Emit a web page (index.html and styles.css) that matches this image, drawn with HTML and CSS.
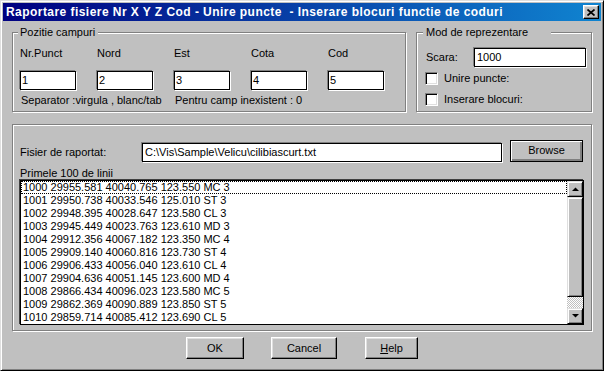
FILE: index.html
```html
<!DOCTYPE html>
<html>
<head>
<meta charset="utf-8">
<title>Raportare fisiere</title>
<link rel="stylesheet" href="styles.css">
</head>
<body>
<div class="window">
  <div class="titlebar">
    <span class="title">Raportare fisiere Nr X Y Z Cod - Unire puncte&nbsp; - Inserare blocuri functie de coduri</span>
    <span class="close"><svg width="8" height="7" viewBox="0 0 8 7"><path d="M0.5 0.5L7.5 6.5M7.5 0.5L0.5 6.5" stroke="#000" stroke-width="1.7" fill="none"/></svg></span>
  </div>
  <div class="content">
    <div class="top-row">
      <div class="group g-fields">
        <span class="legend">Pozitie campuri</span>
        <div class="fields">
          <div class="field"><span class="flabel">Nr.Punct</span><div class="input small">1</div></div>
          <div class="field"><span class="flabel">Nord</span><div class="input small">2</div></div>
          <div class="field"><span class="flabel">Est</span><div class="input small">3</div></div>
          <div class="field"><span class="flabel">Cota</span><div class="input small">4</div></div>
          <div class="field"><span class="flabel">Cod</span><div class="input small">5</div></div>
        </div>
        <div class="notes">
          <span class="note">Separator :virgula , blanc/tab</span>
          <span class="note">Pentru camp inexistent : 0</span>
        </div>
      </div>
      <div class="group g-mode">
        <span class="legend">Mod de reprezentare</span>
        <div class="scara-row"><span class="scara-label">Scara:</span><div class="input scara">1000</div></div>
        <div class="check-row first"><span class="checkbox"></span><span>Unire puncte:</span></div>
        <div class="check-row second"><span class="checkbox"></span><span>Inserare blocuri:</span></div>
      </div>
    </div>
    <div class="group g-file">
      <div class="file-row">
        <span class="file-label">Fisier de raportat:</span>
        <div class="input file-input">C:\Vis\Sample\Velicu\cilibiascurt.txt</div>
        <div class="btn default browse">Browse</div>
      </div>
      <div class="list-label">Primele 100 de linii</div>
      <div class="listbox">
        <div class="rows">
          <div class="row focus">1000 29955.581 40040.765 123.550 MC 3</div>
          <div class="row">1001 29950.738 40033.546 125.010 ST 3</div>
          <div class="row">1002 29948.395 40028.647 123.580 CL 3</div>
          <div class="row">1003 29945.449 40023.763 123.610 MD 3</div>
          <div class="row">1004 29912.356 40067.182 123.350 MC 4</div>
          <div class="row">1005 29909.140 40060.816 123.730 ST 4</div>
          <div class="row">1006 29906.433 40056.040 123.610 CL 4</div>
          <div class="row">1007 29904.636 40051.145 123.600 MD 4</div>
          <div class="row">1008 29866.434 40096.023 123.580 MC 5</div>
          <div class="row">1009 29862.369 40090.889 123.850 ST 5</div>
          <div class="row">1010 29859.714 40085.412 123.690 CL 5</div>
        </div>
        <div class="scrollbar">
          <div class="sb-btn"><svg width="7" height="4" viewBox="0 0 7 4"><path d="M0 4H7L3.5 0.5Z" fill="#000"/></svg></div>
          <div class="sb-thumb"></div>
          <div class="sb-track"></div>
          <div class="sb-btn"><svg width="7" height="4" viewBox="0 0 7 4"><path d="M0 0H7L3.5 3.5Z" fill="#000"/></svg></div>
        </div>
      </div>
    </div>
    <div class="buttons">
      <div class="btn ok">OK</div>
      <div class="btn cancel">Cancel</div>
      <div class="btn help"><u>H</u>elp</div>
    </div>
  </div>
</div>
</body>
</html>
```
FILE: styles.css
```css
* { box-sizing: border-box; }
html, body { margin: 0; padding: 0; }
body {
  background: #c0c0c0;
  font-family: "Liberation Sans", Arial, sans-serif;
  font-size: 11px;
  line-height: 13px;
  color: #000;
}
.window {
  width: 604px;
  height: 371px;
  background: #c0c0c0;
  border: 1px solid;
  border-color: #dfdfdf #000 #000 #dfdfdf;
  box-shadow: inset 1px 1px 0 #fff, inset -1px -1px 0 #808080;
  padding: 2px;
  display: flex;
  flex-direction: column;
}
.titlebar {
  height: 18px;
  flex: none;
  background: linear-gradient(to right, #000080, #1084d0);
  display: flex;
  align-items: center;
  padding-left: 3px;
}
.title {
  color: #fff;
  font-weight: bold;
  font-size: 12px;
  letter-spacing: 0.45px;
  white-space: nowrap;
}
.close {
  margin-left: auto;
  margin-right: 2px;
  width: 16px;
  height: 14px;
  background: #c0c0c0;
  border: 1px solid;
  border-color: #fff #000 #000 #fff;
  box-shadow: inset -1px -1px 0 #808080, inset 1px 1px 0 #dfdfdf;
  display: flex;
  align-items: center;
  justify-content: center;
}
.close svg { display: block; }
.content {
  flex: 1;
  display: flex;
  flex-direction: column;
  padding: 0 9px;
}
.top-row {
  margin-top: 11px;
  display: flex;
  gap: 10px;
}
.group {
  position: relative;
  border: 1px solid #808080;
  box-shadow: inset 1px 1px 0 #fff, 1px 1px 0 #fff;
}
.legend {
  position: absolute;
  top: -7px;
  background: #c0c0c0;
  white-space: nowrap;
}
.g-fields {
  width: 394px;
  height: 80px;
  padding: 14px 0 0 6px;
}
.g-fields .legend { left: 5px; padding: 0 3px 0 2px; }
.fields {
  display: grid;
  grid-template-columns: repeat(5, 77px);
}
.field {
  display: flex;
  flex-direction: column;
  align-items: flex-start;
}
.flabel { padding-left: 1px; }
.input {
  background: #fff;
  border: 1px solid #000;
  box-shadow: -1px -1px 0 #808080, 1px 1px 0 #fff;
  white-space: nowrap;
  overflow: hidden;
}
.input.small {
  width: 56px;
  height: 19px;
  margin-top: 11px;
  padding: 2px 0 0 1px;
  margin-left: 1px;
}
.notes {
  display: grid;
  grid-template-columns: 154px auto;
  margin-top: 4px;
  padding-left: 2px;
}
.g-mode {
  flex: 1;
  height: 80px;
  padding: 15px 0 0 8px;
}
.g-mode .legend { left: 6px; padding: 0 23px 0 3px; }
.scara-row {
  display: flex;
  align-items: center;
}
.scara-label { margin-left: 1px; width: 48px; }
.input.scara {
  width: 112px;
  height: 19px;
  padding: 2px 0 0 2px;
}
.check-row {
  display: flex;
  align-items: center;
  height: 13px;
}
.check-row.first { margin-top: 5px; }
.check-row.second { margin-top: 8px; }
.checkbox {
  width: 13px;
  height: 13px;
  background: #fff;
  border: 1px solid;
  border-color: #808080 #fff #fff #808080;
  box-shadow: inset 1px 1px 0 #000, inset -1px -1px 0 #dfdfdf;
  margin-right: 6px;
  flex: none;
}
.g-file {
  margin-top: 12px;
  height: 207px;
  padding: 15px 8px 0 7px;
}
.file-row {
  display: flex;
  align-items: flex-start;
  height: 22px;
}
.file-label {
  width: 122px;
  margin-top: 6px;
}
.input.file-input {
  width: 360px;
  height: 19px;
  margin-top: 3px;
  padding: 2px 0 0 2px;
}
.btn {
  background: #c0c0c0;
  border: 1px solid;
  border-color: #fff #000 #000 #fff;
  box-shadow: inset -1px -1px 0 #808080, inset 1px 1px 0 #dfdfdf;
  display: flex;
  align-items: center;
  justify-content: center;
  height: 22px;
}
.btn.default {
  border-color: #000;
  box-shadow: inset 1px 1px 0 #fff, inset -1px -1px 0 #808080, inset -2px -2px 0 #808080;
}
.browse {
  width: 73px;
  margin-left: 8px;
  padding-bottom: 1px;
}
.list-label {
  margin-top: 5px;
}
.listbox {
  width: 564px;
  height: 145px;
  background: #fff;
  border: 1px solid #000;
  box-shadow: -1px -1px 0 #404040;
  display: flex;
}
.rows {
  flex: 1;
  overflow: hidden;
}
.row {
  height: 13px;
  line-height: 13px;
  padding-left: 2px;
  white-space: nowrap;
}
.row.focus {
  outline: 1px dotted #000;
  outline-offset: -1px;
}
.scrollbar {
  width: 16px;
  flex: none;
  display: flex;
  flex-direction: column;
}
.sb-btn {
  width: 16px;
  height: 16px;
  flex: none;
  background: #c0c0c0;
  border: 1px solid;
  border-color: #dfdfdf #000 #000 #dfdfdf;
  box-shadow: inset 1px 1px 0 #fff, inset -1px -1px 0 #808080;
  display: flex;
  align-items: center;
  justify-content: center;
}
.sb-btn svg { display: block; }
.sb-thumb {
  height: 100px;
  flex: none;
  background: #c0c0c0;
  border: 1px solid;
  border-color: #dfdfdf #000 #000 #dfdfdf;
  box-shadow: inset 1px 1px 0 #fff, inset -1px -1px 0 #808080;
}
.sb-track {
  flex: 1;
  background: repeating-conic-gradient(#fff 0 25%, #c0c0c0 0 50%) 0 0 / 2px 2px;
}
.buttons {
  display: flex;
  margin-top: 6px;
  padding-left: 174px;
}
.btn.ok { width: 58px; }
.btn.cancel { width: 66px; margin-left: 27px; }
.btn.help { width: 53px; margin-left: 28px; }
```
